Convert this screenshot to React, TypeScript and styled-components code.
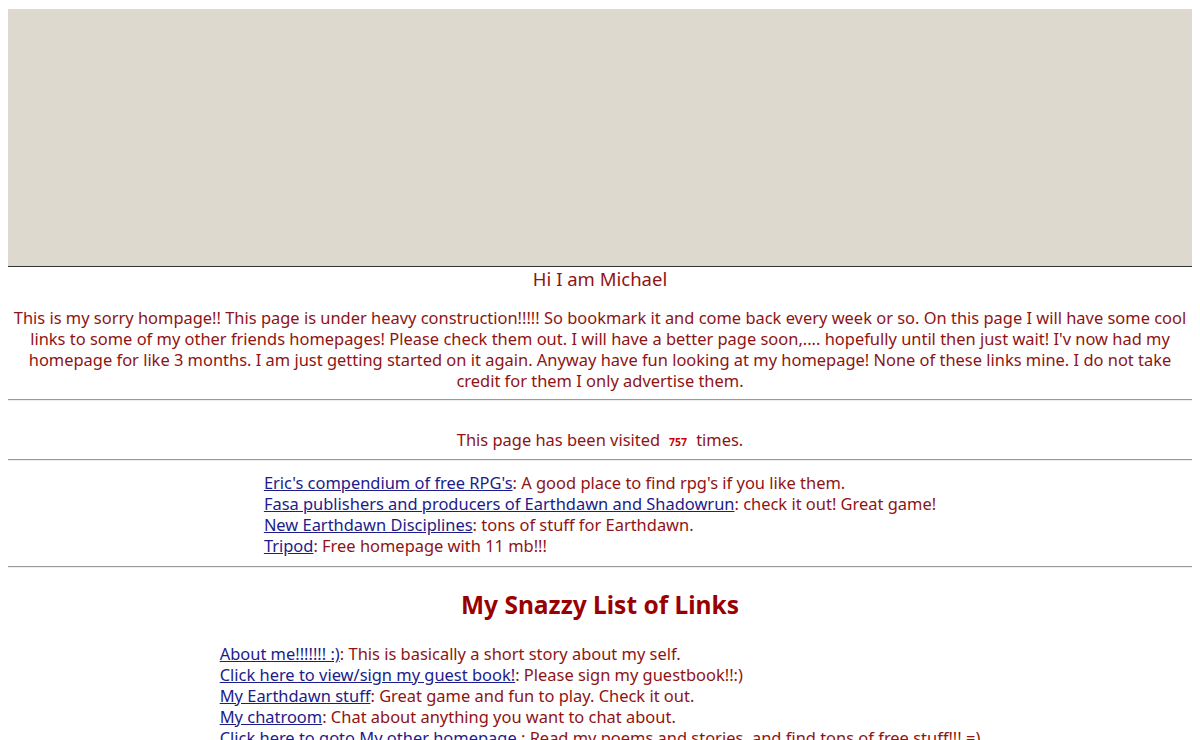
import React from "react";
import styled, { createGlobalStyle } from "styled-components";

const GlobalStyle = createGlobalStyle`
  html, body { background: #ffffff; }
  body {
    margin: 8px;
    font-family: "Noto Sans", "Open Sans", sans-serif;
    font-size: 16.45px;
    line-height: 21px;
    color: #8e1414;
  }
`;

const Page = styled.div`
  display: flex;
  flex-direction: column;
`;

const Banner = styled.div`
  margin-top: 1px;
  height: 257px;
  background: #ded9ce;
  border-bottom: 1px solid #333333;
`;

const Greeting = styled.div`
  text-align: center;
  font-size: 18.5px;
  line-height: 24px;
`;

const Intro = styled.p`
  margin: 16px 0 0;
  text-align: center;
`;

const Rule = styled.hr<{ $top: number; $bottom: number }>`
  width: 100%;
  margin: ${(p) => `${p.$top}px 0 ${p.$bottom}px`};
  border: none;
  border-top: 1px solid #9a9a9a;
  border-bottom: 1px solid #eeeeee;
  height: 0;
`;

const Counter = styled.div`
  text-align: center;
  padding-top: 28px;
`;

const Count = styled.span`
  display: inline-block;
  margin: 0 9px;
  font-size: 10.5px;
  font-weight: 700;
  color: #cc0000;
  line-height: 1;
`;

const LinkBlock = styled.div`
  align-self: center;
  display: flex;
  flex-direction: column;
  text-align: left;
`;

const Item = styled.div`
  white-space: nowrap;
`;

const A = styled.a`
  color: #1c1c8a;
  text-decoration: underline;
`;

const Title = styled.h2`
  margin: 22px 0 23px;
  text-align: center;
  font-size: 24.5px;
  line-height: 30px;
  font-weight: 700;
  color: #990000;
`;

const first = [
  ["Eric's compendium of free RPG's", "A good place to find rpg's if you like them."],
  ["Fasa publishers and producers of Earthdawn and Shadowrun", "check it out! Great game!"],
  ["New Earthdawn Disciplines", "tons of stuff for Earthdawn."],
  ["Tripod", "Free homepage with 11 mb!!!"],
];

const second = [
  ["About me!!!!!!! :)", "This is basically a short story about my self."],
  ["Click here to view/sign my guest book!", "Please sign my guestbook!!:)"],
  ["My Earthdawn stuff", "Great game and fun to play. Check it out."],
  ["My chatroom", "Chat about anything you want to chat about."],
  ["Click here to goto My other homepage ", "Read my poems and stories, and find tons of free stuff!!! =)"],
];

export default function App() {
  return (
    <Page>
      <GlobalStyle />
      <Banner />
      <Greeting>Hi I am Michael</Greeting>
      <Intro>
        This is my sorry hompage!! This page is under heavy construction!!!!! So bookmark it and come back every
        week or so. On this page I will have some cool links to some of my other friends homepages! Please check
        them out. I will have a better page soon,.... hopefully until then just wait! I'v now had my homepage for
        like 3 months. I am just getting started on it again. Anyway have fun looking at my homepage! None of these
        links mine. I do not take credit for them I only advertise them.
      </Intro>
      <Rule $top={8} $bottom={0} />
      <Counter>
        This page has been visited<Count>757</Count>times.
      </Counter>
      <Rule $top={9} $bottom={11} />
      <LinkBlock>
        {first.map(([l, d]) => (
          <Item key={l}>
            <A href="#">{l}</A>: {d}
          </Item>
        ))}
      </LinkBlock>
      <Rule $top={10} $bottom={0} />
      <Title>My Snazzy List of Links</Title>
      <LinkBlock>
        {second.map(([l, d]) => (
          <Item key={l}>
            <A href="#">{l}</A>: {d}
          </Item>
        ))}
      </LinkBlock>
    </Page>
  );
}
